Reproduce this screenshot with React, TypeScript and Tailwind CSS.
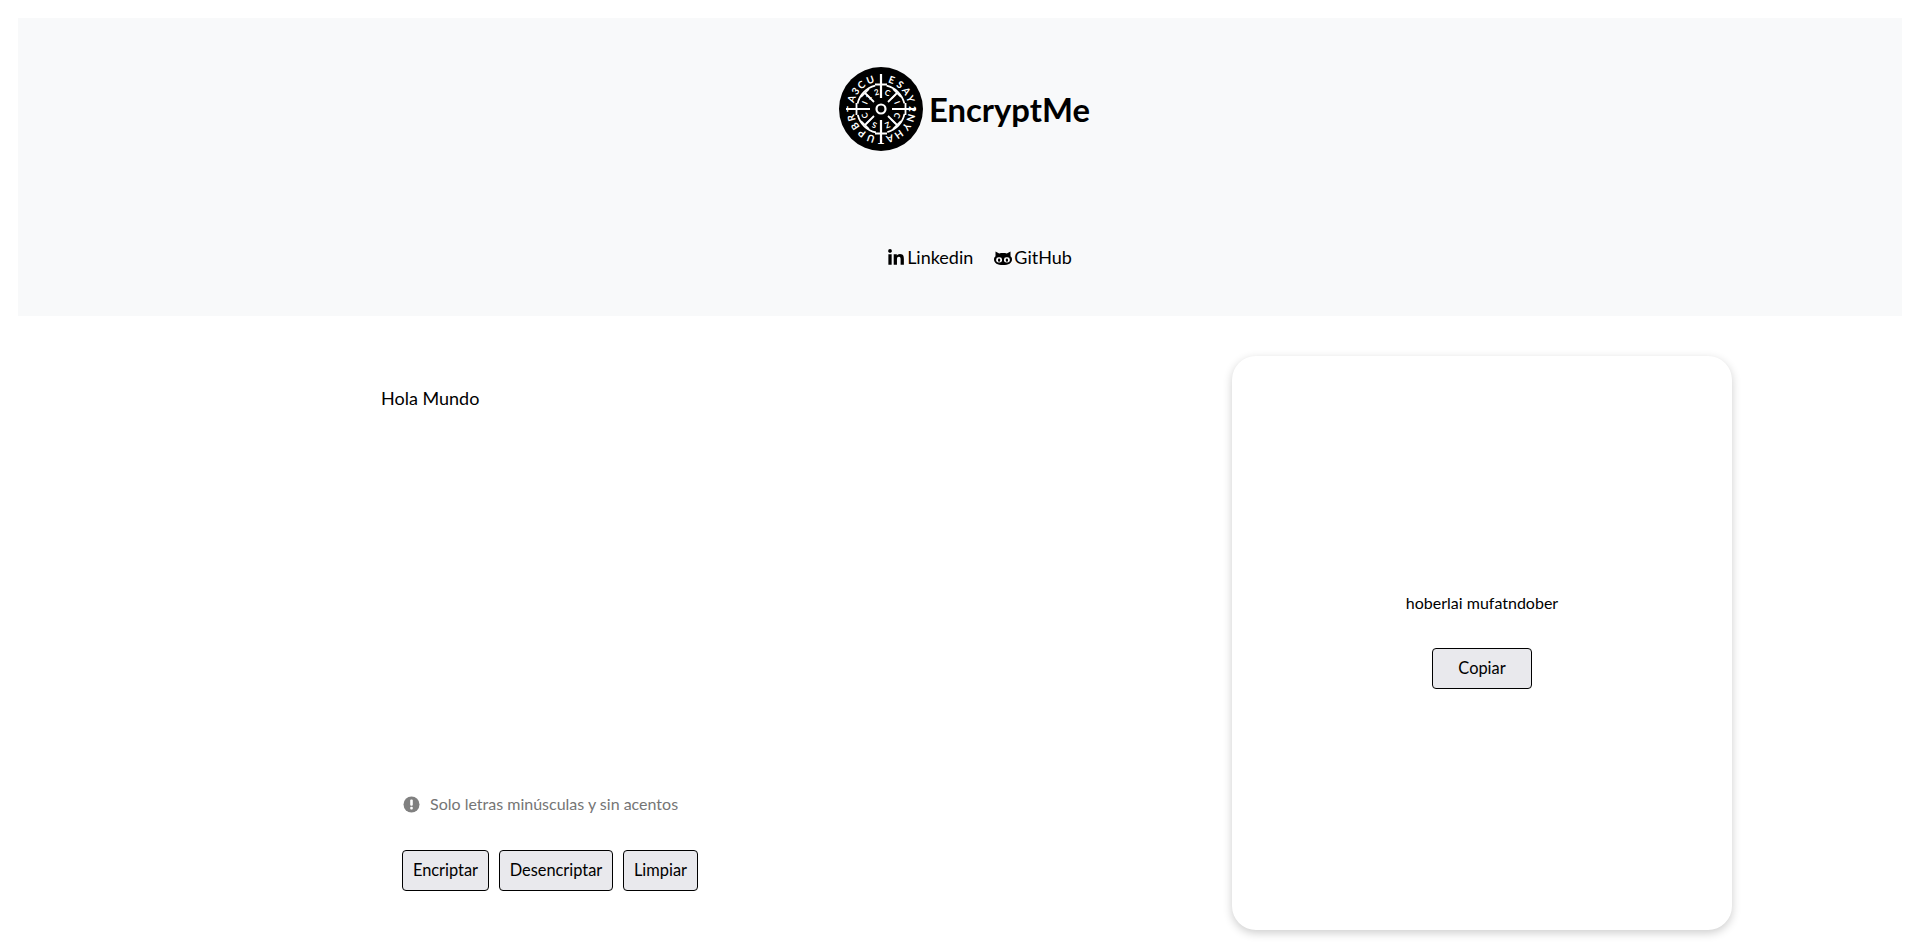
import { FaLinkedinIn } from "react-icons/fa";

// angle in degrees from the top, clockwise
const outerLetters: [string, number][] = [
  ["E", 20], ["S", 38], ["A", 55], ["Y", 71], ["2", 90], ["N", 107], ["Y", 125], ["H", 145], ["A", 163],
  ["T", 180], ["U", 199], ["P", 218], ["B", 236], ["R", 253], ["T", 270], ["A", 289], ["3", 305], ["C", 321], ["U", 340],
];
const innerLetters: [string, number][] = [
  ["2", 345], ["C", 22], ["I", 45], ["I", 68], ["C", 112], ["I", 135], ["Z", 158], ["S", 202], ["I", 225], ["C", 248], ["I", 292], ["1", 315],
];

function Logo() {
  return (
    <svg viewBox="0 0 84 84" className="w-[84px] h-[84px] shrink-0">
      <circle cx="42" cy="42" r="42" fill="#000" />
      {outerLetters.map(([l, a], i) => (
        <text
          key={i}
          x="42"
          y="14.5"
          fontSize="10"
          fontWeight="700"
          fill="#fff"
          textAnchor="middle"
          fontFamily="Lato, sans-serif"
          transform={`rotate(${a} 42 42)`}
        >
          {l}
        </text>
      ))}
      {innerLetters.map(([l, a], i) => (
        <text
          key={i}
          x="42"
          y="27.5"
          fontSize="8"
          fontWeight="700"
          fill="#fff"
          textAnchor="middle"
          fontFamily="Lato, sans-serif"
          transform={`rotate(${a} 42 42)`}
        >
          {l}
        </text>
      ))}
      <circle cx="42" cy="42" r="24" fill="none" stroke="#fff" strokeWidth="1.8" strokeDasharray="26 11.7" strokeDashoffset="-5" />
      <circle cx="42" cy="42" r="4.5" fill="none" stroke="#fff" strokeWidth="2.2" />
      <g stroke="#fff" strokeWidth="2.2">
        <path d="M42 7V31M42 53V77M7 42H31M53 42H77" />
        <path d="M36 17.5H48M36 66.5H48M17.5 36V48M66.5 36V48" strokeWidth="1.8" />
        <path d="M35 35L26 26M49 35L58 26M35 49L26 58M49 49L58 58" strokeWidth="1.8" />
        <path d="M22 30L30 22M54 22L62 30M22 54L30 62M54 62L62 54" strokeWidth="1.6" />
      </g>
    </svg>
  );
}

function GithubCat() {
  return (
    <svg viewBox="0 0 18 14" className="w-[18px] h-[14px] shrink-0">
      <path d="M1.5 0.5L5.2 2.4C6.3 2.1 7.6 2 9 2S11.7 2.1 12.8 2.4L16.5 0.5V5.2C17.5 6 18 7 18 8.2C18 12.2 14.5 14 9 14S0 12.2 0 8.2C0 7 .5 6 1.5 5.2Z" fill="#000" />
      <rect x="2.2" y="6.2" width="5.8" height="5.4" rx="2.4" fill="#fff" />
      <rect x="10" y="6.2" width="5.8" height="5.4" rx="2.4" fill="#fff" />
      <rect x="4" y="7.4" width="2.2" height="3.4" rx="1.1" fill="#000" />
      <rect x="11.8" y="7.4" width="2.2" height="3.4" rx="1.1" fill="#000" />
    </svg>
  );
}

function AlertDot() {
  return (
    <svg viewBox="0 0 17 17" className="w-[17px] h-[17px] shrink-0">
      <circle cx="8.5" cy="8.5" r="8" fill="#808080" />
      <rect x="7.2" y="3.6" width="2.6" height="6.2" rx="1" fill="#fff" />
      <rect x="7.2" y="10.8" width="2.6" height="2.6" rx="1" fill="#fff" />
    </svg>
  );
}

function Btn({ children, className = "" }: { children: string; className?: string }) {
  return (
    <button className={`h-[41px] rounded-[4px] border border-black bg-[#e9e9ed] text-[16.4px] text-black ${className}`}>
      {children}
    </button>
  );
}

export default function App() {
  return (
    <div className="min-h-[946px] bg-white text-black font-['Lato',sans-serif]">
      <header className="mx-[18px] pt-[18px]">
        <div className="h-[298px] bg-[#f8f9fa] flex flex-col items-center pt-[49px]">
          <div className="flex items-center gap-[6px] ml-[9px]">
            <Logo />
            <h1 className="text-[32.8px] font-bold leading-[43px]">EncryptMe</h1>
          </div>
          <nav className="flex items-center gap-[21px] mt-[93px] ml-[39px] text-[18px] leading-[27px]">
            <a className="flex items-center gap-[2px]">
              <FaLinkedinIn className="w-[18px] h-[18px]" />
              Linkedin
            </a>
            <a className="flex items-center gap-[2px]">
              <GithubCat />
              GitHub
            </a>
          </nav>
        </div>
      </header>

      <main className="flex justify-between pt-[40px] pl-[381px] pr-[188px]">
        <section className="w-[760px] flex flex-col pt-[29px]">
          <textarea
            className="w-full h-[401px] resize-none outline-none text-[18px] leading-[27px] bg-transparent"
            defaultValue="Hola Mundo"
          />
          <p className="flex items-center gap-[10px] ml-[22px] mt-[6px] text-base leading-6 text-[#757575]">
            <AlertDot />
            Solo letras minúsculas y sin acentos
          </p>
          <div className="flex gap-[10px] ml-[21px] mt-[34px]">
            <Btn className="w-[87px]">Encriptar</Btn>
            <Btn className="w-[114px]">Desencriptar</Btn>
            <Btn className="w-[75px]">Limpiar</Btn>
          </div>
        </section>

        <aside className="w-[500px] h-[574px] rounded-[24px] bg-white shadow-[0_3px_10px_rgba(0,0,0,0.2)] flex flex-col items-center justify-center gap-[33px] pb-[6px]">
          <p className="text-base leading-6">hoberlai mufatndober</p>
          <Btn className="w-[100px]">Copiar</Btn>
        </aside>
      </main>
    </div>
  );
}
